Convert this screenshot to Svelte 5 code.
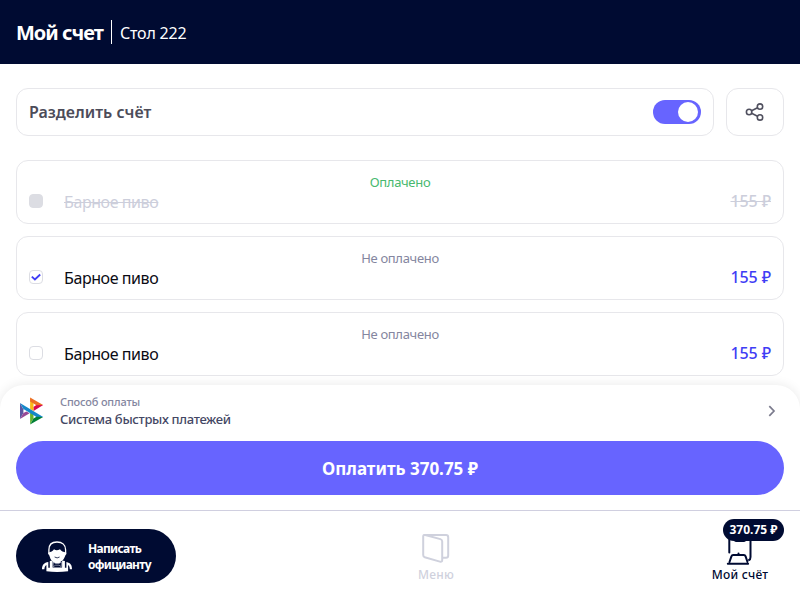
<script>
  const items = [
    { name: 'Барное пиво', price: '155 ₽', status: 'Оплачено', paid: true, checked: false },
    { name: 'Барное пиво', price: '155 ₽', status: 'Не оплачено', paid: false, checked: true },
    { name: 'Барное пиво', price: '155 ₽', status: 'Не оплачено', paid: false, checked: false }
  ];
  let split = $state(true);
</script>

<div class="page">
  <header>
    <h1>Мой счет</h1>
    <span class="divider"></span>
    <span class="table">Стол 222</span>
  </header>

  <main>
    <div class="tools">
      <div class="split">
        <span class="split-label">Разделить счёт</span>
        <button class="toggle" class:on={split} onclick={() => (split = !split)} aria-label="Разделить счёт"><i></i></button>
      </div>
      <button class="share" aria-label="Поделиться">
        <svg width="20" height="20" viewBox="0 0 20 20" fill="none" stroke="#50505f" stroke-width="1.6">
          <circle cx="4.1" cy="10" r="2.7" /><circle cx="15" cy="4.6" r="2.7" /><circle cx="15" cy="15.4" r="2.7" />
          <path d="M6.6 8.8 12.5 5.8M6.6 11.2l5.9 3" />
        </svg>
      </button>
    </div>

    <div class="list">
      {#each items as item}
        <section class="card" class:paid={item.paid}>
          <div class="status">{item.status}</div>
          <div class="line">
            <span class="check">
              {#if item.checked}
                <svg width="12" height="12" viewBox="0 0 12 12" fill="none" stroke="#3f3df5" stroke-width="1.8"><path d="M1.8 5.6 4.9 8.5 10.2 3.5" /></svg>
              {/if}
            </span>
            <span class="name">{item.name}</span>
            <span class="price">{item.price}</span>
          </div>
        </section>
      {/each}
    </div>
  </main>

  <div class="sheet">
    <div class="method">
      <svg class="sbp" width="24" height="28" viewBox="0 0 24 28">
        <path fill="#5b57a2" d="M0 6.1 3.4 12.2v3.7L0 22z" />
        <path fill="#d90751" d="m13.5 14-.1-4 3-2h6.8z" transform="translate(0 .1)" />
        <path fill="#fab718" d="m10.1.5 3.4 6.1V14l-3.4-2z" />
        <path fill="#ed6f26" d="m10.1.5 13.1 7.6-6.8.1-6.3-3.6z" />
        <path fill="#63b22f" d="M10.1 27.5V15l3.4 2v4.3z" />
        <path fill="#1487c9" d="m0 6.1 23.2 13.8h-6.7L3.4 12.1z" />
        <path fill="#017f36" d="m10.1 27.5 3.4-6.1 2.9-1.6 6.8.1z" />
        <path fill="#984995" d="m0 22 9.6-5.7-3.2-1.9-3 1.6z" />
      </svg>
      <div class="method-text">
        <div class="caption">Способ оплаты</div>
        <div class="value">Система быстрых платежей</div>
      </div>
      <svg class="chevron" width="8" height="12" viewBox="0 0 8 12" fill="none" stroke="#7b7b8d" stroke-width="1.7"><path d="m1.3 1.2 4.7 4.8-4.7 4.8" /></svg>
    </div>
    <button class="pay"><span>Оплатить 370.75 ₽</span></button>
  </div>

  <nav>
    <button class="waiter">
      <svg width="32" height="32" viewBox="0 0 32 32">
        <path d="M7.9 14V9.8C7.9 4.6 11.1 2 16 2s8.6 2.6 8.6 7.8V14" fill="none" stroke="#fff" stroke-width="1.3" />
        <path fill="#fff" d="M7.4 12.4c2.5-.2 4.4-1.5 5.6-3.2 2 1.5 3.8 1.1 6 .1 1.2 1.9 3.3 2.9 6.2 3.1v2.1c-1.2 0-1.2 5.3-5.5 7.1v2H12v-2c-3.4-1.7-3-6.8-4.6-7.1z" />
        <path d="M13.6 17q2.6 1.8 5 0" fill="none" stroke="#000b32" stroke-width=".8" />
        <path fill="#fff" d="M1 29.2c0-3.9 2-6.4 6.3-7.1v5.7h1.5v-6.7l2.8-.7v7h9.5v-7l2.8.7v6.7h1.5v-5.7c4.2.8 5.6 3.2 5.6 7.1h-2.2c0-2-.5-3.5-1.7-4.3v6.3q-11.1 1.4-21.7 0v-6.3C4.1 25.7 3.4 27.2 3.4 29.2z" />
        <path d="m12.2 22 2.4 1.5h3.4l2.4-1.5v4.7L18 25.2h-3.4l-2.4 1.5z" fill="#000b32" stroke="#c9ccda" stroke-width=".6" />
      </svg>
      <span class="waiter-text">Написать<br />официанту</span>
    </button>
    <div class="tab menu">
      <svg width="28" height="32" viewBox="0 0 28 32" fill="none" stroke="#cfd1dd" stroke-width="2" stroke-linejoin="round">
        <path d="M3.2 2H24q2.2 0 2.2 2.2v18.3q0 2.2-2.2 2.2h-3.7" />
        <path d="m3.2 2 15.2 4.1q1.8.5 1.8 2.4v18.4q0 2.4-2.3 1.7L2.7 24.2Q1.2 23.8 1.2 22V3.6Q1.2 1.5 3.2 2z" />
      </svg>
      <span>Меню</span>
    </div>
    <div class="tab bill">
      <svg width="28" height="32" viewBox="0 0 28 32" fill="none" stroke="#000b32" stroke-width="2" stroke-linecap="round" stroke-linejoin="round">
        <path d="M3.3 19.5V3.5M24.5 3.5v20.5q0 2.4-1.5 3" />
        <path d="M3.5 29 5.4 23.4q.5-1.4 1.7-1.4h10.8q1.2 0 1.7 1.4l1.9 5.6M1.8 30.8h20.3M12.5 21v-.5" />
        <path fill="#000b32" stroke="none" d="M8 6h12v1q0 2-2 2h-8Q8 9 8 7z" />
      </svg>
      <span>Мой счёт</span>
      <b class="badge">370.75 ₽</b>
    </div>
  </nav>
</div>

<style>
  :global(body) { margin: 0; overflow: hidden; }
  .page { width: 800px; height: 600px; display: flex; flex-direction: column; overflow: hidden; background: #fff; font-family: "Noto Sans", sans-serif; color: #0b0b14; }
  .page, .page * { box-sizing: border-box; }
  button { font: inherit; border: 0; padding: 0; background: none; }
  svg { display: block; flex: none; }
  span, .status, .caption, .value { white-space: nowrap; }
  header { height: 64px; flex: none; background: #000b32; color: #fff; display: flex; align-items: center; padding: 2px 16px 0; }
  h1 { margin: 0; width: 95px; font-size: 20px; line-height: 28px; font-weight: 700; letter-spacing: -1px; white-space: nowrap; }
  .divider { width: 1px; height: 24px; background: #fff; margin: -2px 8px 0 0; }
  .table { font-size: 16px; letter-spacing: -0.2px; }
  main { height: 321px; flex: none; padding: 24px 16px 0; }
  .tools { display: flex; gap: 12px; height: 48px; }
  .split, .share, .card { border: 1px solid #e7e7eb; border-radius: 12px; }
  .split { flex: 1; display: flex; align-items: center; justify-content: space-between; padding: 0 12px; }
  .split-label { font-size: 16px; font-weight: 600; color: #4c4c59; }
  .toggle { width: 48px; height: 24px; border-radius: 12px; background: #d0d1dc; padding: 2px; display: flex; }
  .toggle.on { background: #6764ff; justify-content: flex-end; padding-right: 3px; }
  .toggle i { width: 20px; height: 20px; border-radius: 50%; background: #fff; }
  .share { width: 58px; display: flex; align-items: center; justify-content: center; }
  .list { display: flex; flex-direction: column; gap: 12px; margin-top: 24px; }
  .card { height: 64px; padding: 12px 12px 0; }
  .status { height: 17px; line-height: 19px; font-size: 13px; letter-spacing: -.32px; text-align: center; color: #8486a0; }
  .paid .status { color: #48b96f; }
  .line { display: flex; align-items: center; height: 22px; }
  .check { width: 14px; height: 14px; border: 1px solid #dcdde3; border-radius: 4px; margin-right: 21px; }
  .name { font-size: 16px; line-height: 22px; flex: 1; padding-top: 1px; letter-spacing: 0; }
  .name, .price { text-decoration-thickness: 1px; }
  .name { letter-spacing: -.42px; }
  .price { font-size: 16px; font-weight: 500; letter-spacing: -.1px; color: #3f3df5; }
  .paid .check { background: #dcdde3; }
  .paid .name, .paid .price { color: #cccedb; text-decoration: line-through; }
  .sheet { position: relative; height: 125px; flex: none; border-radius: 24px 24px 0 0; background: #fff; box-shadow: 0 0 12px rgba(0, 0, 0, .09); padding: 9px 16px 0; }
  .method { height: 47px; display: flex; padding: 0 8px 0 4px; }
  .sbp { margin-top: 3px; }
  .method-text { margin-left: 16px; flex: 1; }
  .caption { font-size: 11px; line-height: 16px; font-weight: 500; letter-spacing: -.16px; color: #8486a0; }
  .value { font-size: 13px; line-height: 18px; font-weight: 500; letter-spacing: -.33px; color: #444764; }
  .chevron { margin-top: 11px; }
  .pay { display: block; width: 768px; height: 54px; border-radius: 27px; background: #6764ff; color: #fff; font-size: 17px; font-weight: 700; }
  nav { position: relative; height: 90px; flex: none; border-top: 1px solid #d0cfe0; background: #fff; display: flex; justify-content: space-between; padding: 18px 16px 0; }
  .waiter { width: 160px; height: 54px; border-radius: 27px; background: #000b32; color: #fff; display: flex; align-items: center; padding-left: 25px; text-align: left; }
  .waiter-text { margin-left: 15px; font-size: 12px; line-height: 16px; font-weight: 700; letter-spacing: -.7px; padding-top: 2px; }
  .tab { display: flex; flex-direction: column; align-items: center; width: 88px; font-size: 12px; line-height: 16px; font-weight: 500; letter-spacing: .25px; padding-top: 4px; }
  .tab svg { margin-bottom: 2px; }
  .menu { color: #cfd1dd; }
  .bill { position: relative; color: #000b32; }
  .badge { position: absolute; right: 0; top: -10px; height: 22px; width: 61px; border-radius: 11px; background: #000b32; color: #fff; font-size: 12px; line-height: 22px; letter-spacing: 0; text-align: center; white-space: nowrap; }
</style>
